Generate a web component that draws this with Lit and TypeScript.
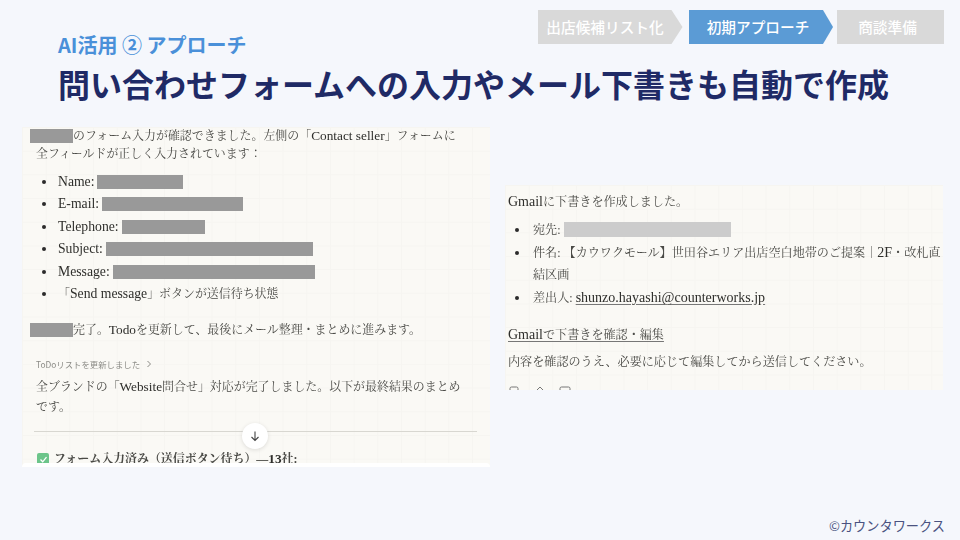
import { LitElement, html, css } from "lit";
import { customElement } from "lit/decorators.js";

const redact = (w: number, gray = false) =>
  html`<span class="redact ${gray ? "light" : ""}" style="width:${w}px"></span>`;

@customElement("app-root")
export class AppRoot extends LitElement {
  static styles = css`
    :host {
      display: block;
      width: 960px;
      height: 540px;
      overflow: hidden;
      background: #f5f7fc;
      font-family: "Noto Sans CJK JP", "Noto Sans", sans-serif;
    }
    .page {
      height: 540px;
      display: flex;
      flex-direction: column;
      box-sizing: border-box;
    }
    .top {
      display: flex;
      justify-content: space-between;
      align-items: flex-start;
      box-sizing: border-box;
      height: 58px;
      padding: 10px 16px 0 58px;
    }
    .eyebrow {
      margin-top: 24px;
      font-size: 20px;
      line-height: 22px;
      font-weight: 700;
      color: #4a90d9;
      white-space: nowrap;
    }
    .steps {
      display: flex;
    }
    .step {
      height: 34px;
      line-height: 34px;
      text-align: center;
      font-size: 14.67px;
      font-weight: 500;
      color: #fff;
      background: #d9d9d9;
      box-sizing: border-box;
      white-space: nowrap;
    }
    .s1 {
      width: 145px;
      padding-right: 10px;
      margin-right: 6.5px;
      clip-path: polygon(0 0, 134px 0, 100% 50%, 134px 100%, 0 100%);
    }
    .s2 {
      width: 144px;
      padding-right: 6px;
      margin-right: 4px;
      background: #5b9bd5;
      clip-path: polygon(0 0, 134px 0, 100% 50%, 134px 100%, 0 100%);
    }
    .s3 {
      width: 107px;
      padding-right: 6px;
    }
    h1 {
      margin: 0;
      padding-left: 58px;
      font-size: 32px;
      line-height: 50px;
      font-weight: 700;
      color: #1f2a66;
      white-space: nowrap;
    }
    .shots {
      display: flex;
      align-items: flex-start;
      gap: 15px;
      padding: 19px 0 0 22px;
    }
    .shot {
      position: relative;
      overflow: hidden;
      box-sizing: border-box;
      background-color: #faf9f5;
      background-image:
        linear-gradient(#f6f5f1 1px, transparent 1px),
        linear-gradient(90deg, #f6f5f1 1px, transparent 1px);
      background-size: 23.7px 23.7px;
      color: #4a4a46;
      font-family: "Liberation Serif", "Noto Serif CJK JP", "Noto Sans CJK JP", serif;
      font-size: 11.95px;
      filter: blur(0.5px);
    }
    .left {
      width: 468px;
      height: 340px;
      padding: 0 8px;
    }
    .right {
      width: 438px;
      height: 205px;
      margin-top: 58px;
      padding: 8px 0 0 3px;
      font-size: 12.1px;
    }
    p {
      margin: 0;
      white-space: nowrap;
    }
    .latin {
      font-size: 13.3px;
      color: #2e2e2b;
    }
    .left li .latin {
      font-size: 13.7px;
    }
    .right .latin {
      font-size: 14px;
    }
    .redact {
      display: inline-block;
      height: 14px;
      vertical-align: -3px;
      background: #999;
    }
    .redact.light {
      height: 15px;
      background: #ccc;
    }
    .l1 {
      line-height: 18px;
    }
    .indent {
      padding-left: 6px;
    }
    ul {
      margin: 0;
      padding: 0 0 0 28px;
      list-style: none;
    }
    li {
      position: relative;
      line-height: 22.4px;
      white-space: nowrap;
    }
    li::before {
      content: "";
      position: absolute;
      left: -16px;
      top: 9px;
      width: 4px;
      height: 4px;
      border-radius: 50%;
      background: #2b2b2b;
    }
    .left ul {
      margin-top: 8px;
    }
    .done {
      margin-top: 16px;
      line-height: 18px;
    }
    .todo {
      margin: 18px 0 0 6px;
      font-family: "Noto Sans CJK JP", sans-serif;
      font-size: 8.4px;
      line-height: 14px;
      color: #8b8b86;
      display: flex;
      align-items: center;
      gap: 6px;
    }
    .summary {
      margin: 6px 0 0 6px;
      line-height: 20px;
    }
    .rule {
      position: relative;
      margin: 14px 5px 0 4px;
      height: 1px;
      background: #d8d7d1;
    }
    .down {
      position: absolute;
      left: 208px;
      top: -8px;
      width: 26px;
      height: 26px;
      border-radius: 50%;
      background: #fff;
      box-shadow: 0 1px 4px rgba(0, 0, 0, 0.12);
      display: flex;
      align-items: center;
      justify-content: center;
    }
    .check-row {
      display: flex;
      align-items: center;
      gap: 5px;
      margin: 20px 0 0 7px;
      font-weight: 700;
      line-height: 14px;
    }
    .box {
      width: 12px;
      height: 12px;
      border-radius: 2px;
      background: #6cc58a;
      display: flex;
      align-items: center;
      justify-content: center;
    }
    .strip {
      position: absolute;
      left: 0;
      right: 0;
      bottom: 0;
      height: 4px;
      background: #fff;
      border-radius: 4px 4px 0 0;
    }
    .right .a1 {
      line-height: 18px;
    }
    .right ul {
      margin-top: 8px;
      padding-left: 25px;
    }
    .right li {
      line-height: 22px;
    }
    .right li + li {
      margin-top: 1px;
    }
    .right li::before {
      top: 9px;
      left: -18px;
    }
    .link {
      text-decoration: underline;
      text-decoration-color: #777;
      text-underline-offset: 2px;
    }
    .gm {
      margin-top: 16px;
      line-height: 20px;
    }
    .note {
      margin-top: 8px;
      line-height: 18px;
    }
    .acts {
      display: flex;
      gap: 13px;
      margin-top: 15px;
      padding-left: 1px;
    }
    footer {
      margin-top: auto;
      padding: 0 15px 5px 0;
      text-align: right;
      font-size: 13.2px;
      line-height: 18px;
      color: #4a5280;
    }
  `;

  render() {
    return html`
      <div class="page">
        <div class="top">
          <div class="eyebrow">AI活用 ② アプローチ</div>
          <div class="steps">
            <div class="step s1">出店候補リスト化</div>
            <div class="step s2">初期アプローチ</div>
            <div class="step s3">商談準備</div>
          </div>
        </div>
        <h1>問い合わせフォームへの入力やメール下書きも自動で作成</h1>
        <div class="shots">
          <div class="shot left">
            <p class="l1">${redact(43)}のフォーム入力が確認できました。左側の「<span class="latin">Contact seller</span>」フォームに</p>
            <p class="l1 indent">全フィールドが正しく入力されています：</p>
            <ul>
              <li><span class="latin">Name:</span> ${redact(86)}</li>
              <li><span class="latin">E-mail:</span> ${redact(141)}</li>
              <li><span class="latin">Telephone:</span> ${redact(83)}</li>
              <li><span class="latin">Subject:</span> ${redact(207)}</li>
              <li><span class="latin">Message:</span> ${redact(202)}</li>
              <li>「<span class="latin">Send message</span>」ボタンが送信待ち状態</li>
            </ul>
            <p class="done">${redact(43)}完了。<span class="latin">Todo</span>を更新して、最後にメール整理・まとめに進みます。</p>
            <div class="todo">
              <span>ToDoリストを更新しました</span>
              <svg width="6" height="8" viewBox="0 0 6 8" fill="none" stroke="#8b8b86" stroke-width="1"><path d="M1.5 1L4.5 4L1.5 7" /></svg>
            </div>
            <div class="summary">
              <p>全ブランドの「<span class="latin">Website</span>問合せ」対応が完了しました。以下が最終結果のまとめ</p>
              <p>です。</p>
            </div>
            <div class="rule">
              <div class="down">
                <svg width="12" height="12" viewBox="0 0 12 12" fill="none" stroke="#444" stroke-width="1.1"><path d="M6 1.5V10.5M2.5 7L6 10.5L9.5 7" /></svg>
              </div>
            </div>
            <div class="check-row">
              <span class="box"><svg width="9" height="9" viewBox="0 0 9 9" fill="none" stroke="#fff" stroke-width="1.3"><path d="M1.5 4.5L3.7 6.8L7.5 2.2" /></svg></span>
              <span>フォーム入力済み（送信ボタン待ち）—<span class="latin">13</span>社:</span>
            </div>
            <div class="strip"></div>
          </div>
          <div class="shot right">
            <p class="a1"><span class="latin">Gmail</span>に下書きを作成しました。</p>
            <ul>
              <li>宛先: ${redact(167, true)}</li>
              <li>件名: 【カウワクモール】世田谷エリア出店空白地帯のご提案｜<span class="latin">2F</span>・改札直<br />結区画</li>
              <li>差出人: <span class="link latin">shunzo.hayashi@counterworks.jp</span></li>
            </ul>
            <p class="gm"><span class="link"><span class="latin">Gmail</span>で下書きを確認・編集</span></p>
            <p class="note">内容を確認のうえ、必要に応じて編集してから送信してください。</p>
            <div class="acts">
              <svg width="12" height="12" viewBox="0 0 12 12" fill="none" stroke="#777" stroke-width="1"><rect x="1" y="1" width="8" height="10" rx="1.5" /></svg>
              <svg width="12" height="12" viewBox="0 0 12 12" fill="none" stroke="#777" stroke-width="1"><path d="M1 6L6 1L11 6V11H1Z" /></svg>
              <svg width="12" height="12" viewBox="0 0 12 12" fill="none" stroke="#777" stroke-width="1"><rect x="1" y="1" width="10" height="10" rx="1.5" /></svg>
            </div>
          </div>
        </div>
        <footer>©カウンタワークス</footer>
      </div>
    `;
  }
}
